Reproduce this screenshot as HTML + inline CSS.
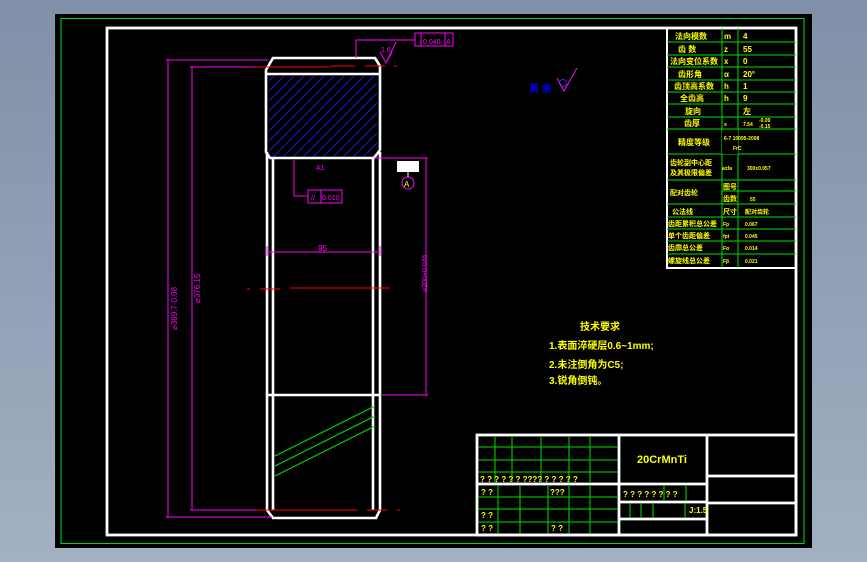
<!DOCTYPE html>
<html><head><meta charset="utf-8"><style>
html,body{margin:0;padding:0;width:867px;height:562px;overflow:hidden;background:#8d9db3}
svg{display:block}
text{font-family:"Liberation Sans","Noto Sans CJK SC",sans-serif}
.y text{font-weight:bold}
</style></head><body>
<svg width="867" height="562" viewBox="0 0 867 562" xmlns="http://www.w3.org/2000/svg">
<defs><linearGradient id="bg" x1="0" y1="0" x2="0" y2="1"><stop offset="0" stop-color="#7f90a8"/><stop offset="1" stop-color="#a3b0c2"/></linearGradient></defs>
<rect width="867" height="562" fill="url(#bg)"/>
<rect x="55" y="14" width="757" height="534" fill="#000"/>
<rect x="61" y="18.5" width="743" height="525" fill="none" stroke="#00e000" stroke-width="1"/>
<rect x="107" y="28" width="689" height="507" fill="none" stroke="#fff" stroke-width="2.8"/>

<g stroke="#00e000" stroke-width="1">
<rect x="667" y="28" width="129" height="240" fill="none" stroke="#fff" stroke-width="2"/>
<line x1="722" y1="28" x2="722" y2="268"/><line x1="738" y1="28" x2="738" y2="268"/>
<line x1="667" y1="42" x2="796" y2="42"/><line x1="667" y1="55" x2="796" y2="55"/><line x1="667" y1="67" x2="796" y2="67"/>
<line x1="667" y1="80" x2="796" y2="80"/><line x1="667" y1="92" x2="796" y2="92"/><line x1="667" y1="104" x2="796" y2="104"/>
<line x1="667" y1="117" x2="796" y2="117"/><line x1="667" y1="129" x2="796" y2="129"/><line x1="667" y1="154" x2="796" y2="154"/>
<line x1="667" y1="180" x2="796" y2="180"/><line x1="722" y1="191" x2="796" y2="191"/><line x1="667" y1="204" x2="796" y2="204"/>
<line x1="667" y1="217" x2="796" y2="217"/><line x1="667" y1="229" x2="796" y2="229"/><line x1="667" y1="241" x2="796" y2="241"/><line x1="667" y1="254" x2="796" y2="254"/>
</g>
<rect x="722" y="130" width="16" height="24" fill="#000"/>
<g class="y" fill="#ffff00" font-size="8">
<text x="675" y="39">法向模数</text><text x="724" y="39">m</text><text x="743" y="39">4</text>
<text x="678" y="52">齿 数</text><text x="724" y="52">z</text><text x="743" y="52">55</text>
<text x="670" y="64">法向变位系数</text><text x="724" y="64">x</text><text x="743" y="64">0</text>
<text x="678" y="77">齿形角</text><text x="724" y="77">α</text><text x="743" y="77">20°</text>
<text x="674" y="89">齿顶高系数</text><text x="724" y="89">h</text><text x="743" y="89">1</text>
<text x="680" y="101">全齿高</text><text x="724" y="101">h</text><text x="743" y="101">9</text>
<text x="685" y="114">旋向</text><text x="743" y="114">左</text>
<text x="684" y="126">齿厚</text><text x="724" y="126" font-size="5">s</text><text x="743" y="126" font-size="5">7.54</text><text x="759" y="122" font-size="5">-0.09</text><text x="759" y="128" font-size="5">-0.15</text>
<text x="678" y="145">精度等级</text><text x="724" y="140" font-size="5">6-7 10095-2008</text><text x="733" y="150" font-size="5">FrC</text>
<text x="670" y="165" font-size="7">齿轮副中心距</text><text x="670" y="175" font-size="7">及其极限偏差</text><text x="722" y="170" font-size="5">a±fa</text><text x="747" y="170" font-size="5">300±0.057</text>
<text x="670" y="195" font-size="7">配对齿轮</text><text x="723" y="189" font-size="7">图号</text><text x="723" y="201" font-size="7">齿数</text><text x="750" y="201" font-size="5">55</text>
<text x="672" y="214" font-size="7">公法线</text><text x="723" y="214" font-size="7">尺寸</text><text x="745" y="214" font-size="6">配对齿轮</text>
<text x="668" y="226" font-size="7">齿距累积总公差</text><text x="723" y="226" font-size="5">Fp</text><text x="745" y="226" font-size="5">0.067</text>
<text x="668" y="238" font-size="7">单个齿距偏差</text><text x="723" y="238" font-size="5">fpt</text><text x="745" y="238" font-size="5">0.045</text>
<text x="668" y="250" font-size="7">齿廓总公差</text><text x="723" y="250" font-size="5">Fα</text><text x="745" y="250" font-size="5">0.014</text>
<text x="668" y="263" font-size="7">螺旋线总公差</text><text x="723" y="263" font-size="5">Fβ</text><text x="745" y="263" font-size="5">0.021</text>
</g>

<g stroke="#fff" stroke-width="2.8" fill="none">
<rect x="477" y="435" width="319" height="100"/>
<line x1="619" y1="435" x2="619" y2="535"/><line x1="707" y1="435" x2="707" y2="535"/>
<line x1="477" y1="484" x2="707" y2="484"/>
<line x1="707" y1="476" x2="796" y2="476"/><line x1="707" y1="503" x2="796" y2="503"/>
<line x1="619" y1="502" x2="707" y2="502"/><line x1="619" y1="519" x2="707" y2="519"/>
</g>
<g stroke="#00e000" stroke-width="1">
<line x1="495" y1="436" x2="495" y2="483"/><line x1="512" y1="436" x2="512" y2="483"/><line x1="541" y1="436" x2="541" y2="483"/><line x1="569" y1="436" x2="569" y2="483"/><line x1="590" y1="436" x2="590" y2="483"/>
<line x1="478" y1="447" x2="618" y2="447"/><line x1="478" y1="460" x2="618" y2="460"/><line x1="478" y1="472" x2="618" y2="472"/>
<line x1="498" y1="486" x2="498" y2="534"/><line x1="520" y1="486" x2="520" y2="534"/><line x1="548" y1="486" x2="548" y2="534"/><line x1="569" y1="486" x2="569" y2="534"/><line x1="590" y1="486" x2="590" y2="534"/>
<line x1="478" y1="497" x2="618" y2="497"/><line x1="478" y1="509" x2="618" y2="509"/><line x1="478" y1="522" x2="618" y2="522"/>
<line x1="664" y1="485" x2="664" y2="501"/><line x1="686" y1="485" x2="686" y2="501"/>
<line x1="630" y1="503" x2="630" y2="518"/><line x1="641" y1="503" x2="641" y2="518"/><line x1="653" y1="503" x2="653" y2="518"/><line x1="685" y1="503" x2="685" y2="518"/>
</g>
<g class="y" fill="#ffff00" font-size="8">
<text x="480" y="482">? ? ? ?  ?   ? ????  ? ?  ? ? ?</text>
<text x="481" y="495">? ?</text><text x="550" y="495">???</text>
<text x="481" y="518">? ?</text><text x="481" y="531">? ?</text><text x="551" y="531">? ?</text>
<text x="623" y="497">? ? ? ?   ? ?   ? ?</text>
<text x="689" y="513">J:1.5</text>
<text x="637" y="463" font-size="11" font-weight="normal">20CrMnTi</text>
</g>

<g class="y" fill="#ffff00" font-size="10">
<text x="580" y="330">技术要求</text>
<text x="549" y="349">1.表面淬硬层0.6~1mm;</text>
<text x="549" y="368">2.未注倒角为C5;</text>
<text x="549" y="384">3.锐角倒钝。</text>
</g>
<text x="529" y="92" fill="#0000ff" font-size="10" font-weight="bold">其 余</text>
<circle cx="563" cy="83" r="3.5" fill="none" stroke="#4040ff" stroke-width="0.8"/>
<path d="M557 78 L564 91 L577 68" fill="none" stroke="#ff00ff" stroke-width="1"/>

<clipPath id="hc"><rect x="269" y="76" width="108" height="82"/></clipPath>
<g clip-path="url(#hc)" stroke="#2020ff" stroke-width="0.8">
<path d="M190 160 L290 60 M200 160 L300 60 M210 160 L310 60 M220 160 L320 60 M230 160 L330 60 M240 160 L340 60 M250 160 L350 60 M260 160 L360 60 M270 160 L370 60 M280 160 L380 60 M290 160 L390 60 M300 160 L400 60 M310 160 L410 60 M320 160 L420 60 M330 160 L430 60 M340 160 L440 60 M350 160 L450 60 M360 160 L460 60 M370 160 L470 60 M380 160 L480 60"/>
</g>

<g stroke="#fff" stroke-width="2.6" fill="none">
<path d="M266 70 L273 58 L375 58 L380 66 L380 150 L374 158 L270 158 L266 152 Z"/>
<line x1="267" y1="74" x2="379" y2="74"/>
<line x1="267" y1="152" x2="267" y2="510"/><line x1="273" y1="158" x2="273" y2="510"/>
<line x1="373" y1="158" x2="373" y2="510"/><line x1="380" y1="152" x2="380" y2="510"/>
<line x1="267" y1="395" x2="380" y2="395"/>
<path d="M267 510 L273 518 L376 518 L380 510"/>
</g>
<g stroke="#00e000" stroke-width="1">
<line x1="275" y1="456" x2="375" y2="406"/><line x1="275" y1="466" x2="375" y2="416"/><line x1="275" y1="476" x2="375" y2="426"/>
</g>

<g stroke="#ff0000" stroke-width="1">
<line x1="247" y1="289" x2="250" y2="289"/><line x1="260" y1="289" x2="280" y2="289"/><line x1="290" y1="288" x2="390" y2="288"/>
<line x1="257" y1="510" x2="357" y2="510"/><line x1="367" y1="510" x2="387" y2="510"/><line x1="397" y1="510" x2="400" y2="510"/>
<line x1="255" y1="67" x2="330" y2="67"/><line x1="330" y1="66" x2="355" y2="66"/><line x1="365" y1="66" x2="385" y2="66"/><line x1="394" y1="66" x2="397" y2="66"/>
</g>

<g stroke="#ff00ff" stroke-width="1" fill="none">
<line x1="168" y1="60" x2="168" y2="517"/><line x1="166" y1="60" x2="268" y2="60"/><line x1="166" y1="517" x2="272" y2="517"/>
<line x1="192" y1="67" x2="192" y2="510"/><line x1="190" y1="67" x2="255" y2="67"/><line x1="190" y1="510" x2="257" y2="510"/>
<line x1="426" y1="158" x2="426" y2="395"/><line x1="374" y1="158" x2="428" y2="158"/><line x1="382" y1="395" x2="428" y2="395"/>
<line x1="267" y1="252" x2="380" y2="252"/><line x1="267" y1="246" x2="267" y2="256"/><line x1="380" y1="246" x2="380" y2="256"/>
<path d="M356 58 L356 40 L415 40"/>
<rect x="415" y="33" width="38" height="13"/><line x1="421" y1="33" x2="421" y2="46"/><line x1="445" y1="33" x2="445" y2="46"/>
<path d="M380 52 L386 63 L392 52 M386 63 L396 42"/>
<path d="M294 160 L294 196 L308 196"/>
<rect x="308" y="190" width="34" height="13"/><line x1="321" y1="190" x2="321" y2="203"/>
<circle cx="408" cy="183" r="6"/>
</g>
<rect x="397" y="161" width="22" height="11" fill="#fff"/>
<line x1="408" y1="172" x2="408" y2="177" stroke="#fff"/>
<g fill="#ff00ff" font-size="7">
<text x="423" y="44">0.040</text><text x="446" y="44">A</text>
<text x="322" y="200">0.010</text><text x="311" y="200">//</text>
<text x="381" y="52">1.6</text>
<text x="316" y="170">A1</text>
<text x="318" y="251" font-size="8">95</text>
<text transform="translate(177,330) rotate(-90)" font-size="8">⌀389.7-0.08</text>
<text transform="translate(200,303) rotate(-90)" font-size="8">⌀376.15</text>
<text transform="translate(427,292) rotate(-90)" font-size="7">⌀200+0.046</text>
</g>
<text x="404" y="187" fill="#ffff00" font-size="8">A</text>
</svg>
</body></html>
